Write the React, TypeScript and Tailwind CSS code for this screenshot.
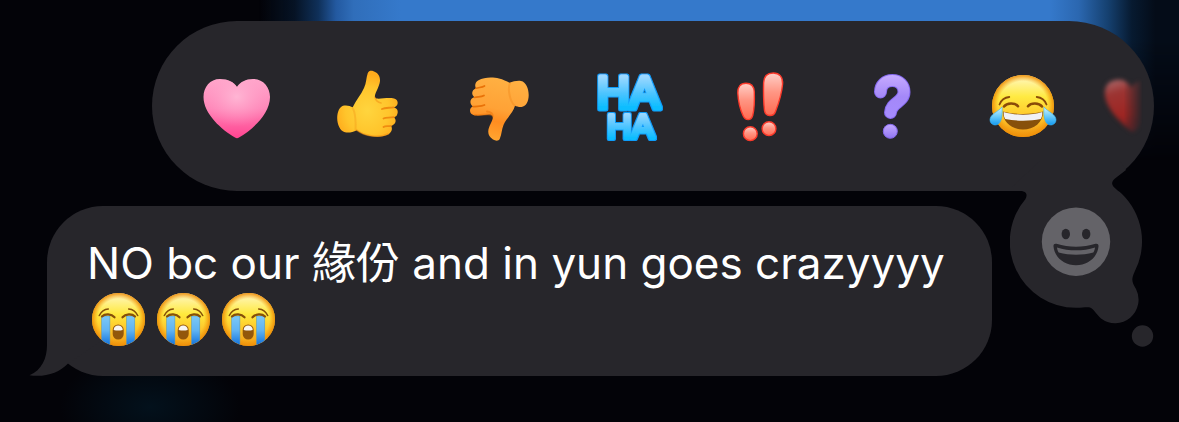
import { useId } from "react";
import type { ReactNode } from "react";

function PinkHeart() {
  return (
    <svg viewBox="0 0 80 80" className="size-20" aria-hidden="true">
      <defs>
        <linearGradient id="pink" x1="0" y1="0" x2="0" y2="1">
          <stop offset="0" stopColor="#ffa6cb" />
          <stop offset="0.5" stopColor="#ff86b8" />
          <stop offset="1" stopColor="#ff4390" />
        </linearGradient>
        <radialGradient id="pinkGlow" cx="0.5" cy="0.3" r="0.5">
          <stop offset="0" stopColor="#ffb9d6" stopOpacity="0.9" />
          <stop offset="1" stopColor="#ffa0c8" stopOpacity="0" />
        </radialGradient>
      </defs>
      <path fill="url(#pink)" d="M40 21C43 16 49 13 56 13C66 13 73 21 73 31C73 48 55 64 42 71.5Q40 73 38 71.5C25 64 6.5 48 6.5 31C6.5 21 13 13 23 13C31 13 37 16 40 21Z" />
      <path fill="url(#pinkGlow)" d="M40 21C43 16 49 13 56 13C66 13 73 21 73 31C73 48 55 64 42 71.5Q40 73 38 71.5C25 64 6.5 48 6.5 31C6.5 21 13 13 23 13C31 13 37 16 40 21Z" />
    </svg>
  );
}

function ThumbUp() {
  return (
    <svg viewBox="0 0 80 80" className="size-20" aria-hidden="true">
      <defs>
        <radialGradient id="up" cx="0.5" cy="0.6" r="0.55">
          <stop offset="0" stopColor="#ffd53e" />
          <stop offset="0.65" stopColor="#ffc52c" />
          <stop offset="1" stopColor="#ffab1c" />
        </radialGradient>
      </defs>
      <path
        fill="url(#up)"
        d="M24.7 41.3C28 34 33 29 36 22C38.5 17 38 12 39.8 7C41 4.5 43 4.4 45.5 5.2C50 7 52.3 10 52 15C51.5 21 46 28 47 31.5C48 34 57 31.5 65 32.2C70.5 33 70.5 38 68.5 39.7C67.5 41 66 41.3 65.3 41.5C70 42 70.5 46 69 49C68.3 50.4 67 51 65.8 51.2C69 53.5 68 58.5 63 60C65 62.5 63.5 66.5 60.5 68.3C56 71 49 71.3 42 70C36.5 69 32 66.5 28.7 64.2C25 66 21 67.2 17 66.3C12 65 9.2 58.5 9.2 52.3C9.2 46 11.5 40.5 16 39.6C19 39 22.5 40 24.7 41.3Z"
      />
      <g fill="none" stroke="#f08c10" strokeLinecap="round">
        <path strokeWidth="1.8" d="M65.5 41.4C60 42 57 41.5 54 43M65.8 51.1C61 52 58 51 55.5 52.5M63 59.8C59.5 60.5 57.5 59.5 55.5 61" />
        <path strokeWidth="2" opacity="0.3" d="M24.5 42C27.5 46 28 58 27.5 64" />
        <path strokeWidth="1.6" opacity="0.5" d="M47 31.5C48 35 50 36.5 53 37M28.7 64.2C37 70.5 51 72 60 68" />
      </g>
    </svg>
  );
}

function ThumbDown() {
  return (
    <svg viewBox="0 0 80 80" className="size-20" aria-hidden="true">
      <defs>
        <linearGradient id="down" x1="0.6" y1="0" x2="0.4" y2="1">
          <stop offset="0" stopColor="#ffb143" />
          <stop offset="0.5" stopColor="#ffa236" />
          <stop offset="0.7" stopColor="#ff8d20" />
          <stop offset="1" stopColor="#ffa631" />
        </linearGradient>
      </defs>
      <path
        fill="url(#down)"
        d="M50.5 16.8C54 15.5 58 14.5 62 15C67 16 69.7 22.5 69.7 29C69.7 35.5 67 40.5 62.5 41C60 41.2 57.5 40.5 56 39.8C54 47 47.5 52 44.5 59C42.5 63.5 43 68 40.7 73C39.5 75.3 36.5 75 34 73.5C30.5 71.5 29 68.5 29.3 65C29.5 60 34.5 54 33.8 50.5C32.5 46.5 25 50 16.5 49.3C10.5 49 10 43.5 12.3 41.4C12.8 40.8 13.6 40.6 14.3 40.5C10.5 38.5 10.5 33.5 14 31.8C14.5 31.5 15 31.4 15.5 31.3C12 28.5 12.5 24 17 22.2C15.5 20 16 16 19.5 14.3C25 11 34 11 40 12.5C44 13.5 47.5 15.2 50.5 16.8Z"
      />
      <g fill="none" stroke="#e97208" strokeLinecap="round">
        <path strokeWidth="1.7" d="M17 22.3C20 21.3 23 21.5 25.5 20M15.5 31.5C19 30.5 22 31.5 25 29.5M14.3 40.7C18 40 22 40.7 25.5 39" />
        <path strokeWidth="2" opacity="0.25" d="M51 17C48.5 22 50.5 35 55.5 39.5" />
        <path strokeWidth="1.8" opacity="0.5" d="M33.8 50.5C34 47.5 32 46 28 45.5M16 49C23 50 30 46.5 33.5 49.5" />
      </g>
    </svg>
  );
}

function Haha() {
  return (
    <svg viewBox="0 0 80 80" className="size-20 font-['Liberation_Sans',sans-serif]" aria-hidden="true">
      <defs>
        <linearGradient id="ha" gradientUnits="userSpaceOnUse" x1="0" y1="9" x2="0" y2="46">
          <stop offset="0.05" stopColor="#9bd8ff" />
          <stop offset="0.5" stopColor="#4cc4ff" />
          <stop offset="0.9" stopColor="#08bdff" />
        </linearGradient>
        <linearGradient id="haSmall" gradientUnits="userSpaceOnUse" x1="0" y1="46" x2="0" y2="76">
          <stop offset="0.05" stopColor="#9bd8ff" />
          <stop offset="0.5" stopColor="#4cc4ff" />
          <stop offset="0.9" stopColor="#08bdff" />
        </linearGradient>
        <filter id="balloon" x="-10%" y="-10%" width="120%" height="120%">
          <feMorphology in="SourceAlpha" operator="dilate" radius="1" result="grown" />
          <feFlood floodColor="#119dfb" />
          <feComposite in2="grown" operator="in" result="edge" />
          <feMerge>
            <feMergeNode in="edge" />
            <feMergeNode in="SourceGraphic" />
          </feMerge>
        </filter>
      </defs>
      <text strokeLinejoin="round" strokeLinecap="round" filter="url(#balloon)">
        <tspan x="7" y="42" fontSize="45" strokeWidth="5" fill="url(#ha)" stroke="url(#ha)">HA</tspan>
        <tspan x="17" y="72" fontSize="34" strokeWidth="4" fill="url(#haSmall)" stroke="url(#haSmall)">HA</tspan>
      </text>
    </svg>
  );
}

function Emphasis() {
  return (
    <svg viewBox="0 0 80 80" className="size-20" aria-hidden="true">
      <defs>
        <linearGradient id="red" x1="0" y1="0" x2="0" y2="1">
          <stop offset="0.05" stopColor="#ffc9c0" />
          <stop offset="0.45" stopColor="#ff9684" />
          <stop offset="1" stopColor="#ff6b52" />
        </linearGradient>
      </defs>
      <g fill="url(#red)" stroke="#fb3a2b" strokeWidth="1.4">
        <path d="M25 17.3C19.5 17.3 16.5 21 16.8 27C17.2 35 19.5 44 22 49.5C24.5 55 30 55 31.7 49.5C33.3 43 33.6 34 33.3 26C33 20.5 30 17.3 25 17.3Z" />
        <path d="M52.3 7C46 7 42.8 11 42.6 17C42.4 26 42.5 36 43.5 44.5C44.3 50.8 52.5 51.3 54.5 45.5C58 36.5 60.8 27 61.6 18C62 11 58.5 7 52.3 7Z" />
        <circle cx="29.3" cy="67.7" r="6.9" />
        <circle cx="48" cy="62.7" r="6.9" />
      </g>
    </svg>
  );
}

function Question() {
  return (
    <svg viewBox="0 0 80 80" className="size-20" aria-hidden="true">
      <defs>
        <linearGradient id="violet" gradientUnits="userSpaceOnUse" x1="0" y1="8" x2="0" y2="54">
          <stop offset="0" stopColor="#c7acff" />
          <stop offset="0.5" stopColor="#a488f8" />
          <stop offset="1" stopColor="#a68cff" />
        </linearGradient>
        <linearGradient id="violetDot" x1="0" y1="0" x2="0" y2="1">
          <stop offset="0" stopColor="#c4a9ff" />
          <stop offset="1" stopColor="#9176f2" />
        </linearGradient>
      </defs>
      <g fill="none" strokeLinecap="round">
        <path stroke="#8569ee" strokeWidth="13" d="M28.5 26C28.5 19 33.5 14.5 40.3 14.5C47.5 14.5 52 19.5 52 26C52 36 39 36.5 38.5 46.5" />
        <path stroke="url(#violet)" strokeWidth="11" d="M28.5 26C28.5 19 33.5 14.5 40.3 14.5C47.5 14.5 52 19.5 52 26C52 36 39 36.5 38.5 46.5" />
      </g>
      <circle cx="38.3" cy="65.3" r="7" fill="url(#violetDot)" stroke="#8569ee" />
    </svg>
  );
}

function Joy() {
  return (
    <svg viewBox="0 0 80 80" className="size-20" aria-hidden="true">
      <defs>
        <linearGradient id="joy" x1="0" y1="0" x2="0" y2="1">
          <stop offset="0.05" stopColor="#fff6b4" />
          <stop offset="0.35" stopColor="#ffea42" />
          <stop offset="0.65" stopColor="#ffc92b" />
          <stop offset="1" stopColor="#ef9412" />
        </linearGradient>
        <radialGradient id="joyRim" cx="0.5" cy="0.5" r="0.5">
          <stop offset="0.8" stopColor="#f29a0c" stopOpacity="0" />
          <stop offset="1" stopColor="#ef8f08" stopOpacity="0.95" />
        </radialGradient>
        <linearGradient id="drop" x1="0" y1="0" x2="0" y2="1">
          <stop offset="0" stopColor="#d6f4ff" />
          <stop offset="0.5" stopColor="#6fcdf9" />
          <stop offset="1" stopColor="#149af0" />
        </linearGradient>
      </defs>
      <circle cx="40" cy="40" r="31" fill="url(#joy)" />
      <circle cx="40" cy="40" r="31" fill="url(#joyRim)" />
      <g fill="none" stroke="#8a4b08" strokeLinecap="round">
        <path strokeWidth="1.8" d="M16.5 38.5C18 34.5 21.5 31.5 26.3 31M53.7 31C58.5 31.5 62 34.5 63.5 38.5" />
        <path strokeWidth="2.6" d="M21 40.5C24 36.5 32 36.5 35 40.2M45 40.2C48 36.5 56 36.5 59 40.5" />
      </g>
      <path fill="#87500a" d="M19.8 45.5C30 48.8 50 48.8 60.2 45.5C60 56.5 51 63.5 40 63.5C29 63.5 20 56.5 19.8 45.5Z" />
      <path fill="#f1f1f4" d="M20.7 46C32 49.5 48 49.5 59.3 46C59.5 49 58.8 51.5 57.8 53C47 55.2 33 55.2 22.2 53C21.2 51.5 20.5 49 20.7 46Z" />
      <g fill="url(#drop)" stroke="#38b3f4" strokeWidth="0.6">
        <path d="M19 41C19.5 48 19 55 15.5 58C11.5 60.5 6.8 58 7 53.5C7.3 48 15 46 19 41Z" />
        <path d="M61 41C60.5 48 61 55 64.5 58C68.5 60.5 73.2 58 73 53.5C72.7 48 65 46 61 41Z" />
      </g>
    </svg>
  );
}

function FadedHeart() {
  return (
    <svg
      viewBox="0 0 65 80"
      className="h-20 w-[65px] blur-[2px] [mask-image:linear-gradient(to_right,black_55%,transparent_84%)]"
      aria-hidden="true"
    >
      <defs>
        <linearGradient id="fade" x1="0" y1="0" x2="0.25" y2="1">
          <stop offset="0" stopColor="#ac7072" />
          <stop offset="0.3" stopColor="#9c3432" />
          <stop offset="0.75" stopColor="#9e2522" />
          <stop offset="1" stopColor="#7b2224" />
        </linearGradient>
      </defs>
      <path fill="url(#fade)" d="M44 22C40 15 34 13 28 14C19 15 16 22 17 30C19 43 32 57 45 66C51 63 57 56 60 50V16C52 14 46 17 44 22Z" />
    </svg>
  );
}

function Sob() {
  const id = useId();
  return (
    <svg viewBox="0 0 53 53" className="size-[53px]" role="img" aria-label="Loudly crying face">
      <defs>
        <linearGradient id={`${id}f`} x1="0" y1="0" x2="0" y2="1">
          <stop offset="0.03" stopColor="#fff6bc" />
          <stop offset="0.4" stopColor="#ffe93d" />
          <stop offset="0.7" stopColor="#fec42a" />
          <stop offset="1" stopColor="#f29a13" />
        </linearGradient>
        <radialGradient id={`${id}r`}>
          <stop offset="0.78" stopColor="#f29a0c" stopOpacity="0" />
          <stop offset="1" stopColor="#ee8d08" stopOpacity="0.95" />
        </radialGradient>
        <linearGradient id={`${id}t`} x1="0" y1="0" x2="0" y2="1">
          <stop offset="0" stopColor="#7cc8f5" />
          <stop offset="0.5" stopColor="#5fb3f2" />
          <stop offset="1" stopColor="#1272dc" />
        </linearGradient>
        <clipPath id={`${id}c`}>
          <circle cx="26.5" cy="26.5" r="26.5" />
        </clipPath>
      </defs>
      <circle cx="26.5" cy="26.5" r="26.5" fill={`url(#${id}f)`} />
      <circle cx="26.5" cy="26.5" r="26.5" fill={`url(#${id}r)`} />
      <g clipPath={`url(#${id}c)`} fill={`url(#${id}t)`} stroke="#4b95c4" strokeWidth="0.5">
        <rect x="9.7" y="23" width="8.2" height="29" />
        <rect x="34.6" y="23" width="8.2" height="29" />
      </g>
      <g fill="none" stroke="#865009" strokeLinecap="round">
        <path strokeWidth="1.6" d="M7.3 22.5C9 19 12 16.3 16.3 16M36.7 16C41 16.3 44 19 45.7 22.5" />
        <path strokeWidth="2.2" d="M10 23.5C13 20.5 19.5 20.8 22.5 24.3M30.5 24.3C33.5 20.8 40 20.5 43 23.5" />
      </g>
      <rect x="20.7" y="31.5" width="11" height="15" rx="5.5" fill="#93570b" />
      <path fill="#f8f6f4" d="M21.7 37C21.7 34 23.5 32.5 26.2 32.5S30.7 34 30.7 37Q26.2 38.2 21.7 37Z" />
    </svg>
  );
}

/* Connected thought bubble holding the emoji picker face. */
function PickerBubble() {
  return (
    <svg viewBox="1010 161 144 187" className="h-[187px] w-36" aria-hidden="true">
      <path
        fill="#27262b"
        d="M1012 187V191H1020C1026 191 1028 194 1025.500 199A66 66 0 0 0 1076 307.700C1081 308 1087 306.500 1090 307.500C1094 309 1096 314 1101 318.500A23.500 23.500 0 0 0 1136 289C1132 282 1131 280 1134.500 272A66 66 0 0 0 1121.500 193.500C1113 187 1109 184 1115 178.500L1126 170L1120 161H1040Z"
      />
      <circle cx="1142.500" cy="336" r="10.700" fill="#27262b" />
      <circle cx="1076" cy="241.700" r="34.200" fill="#646368" />
      <g fill="#27262b">
        <ellipse cx="1065.800" cy="234" rx="4.200" ry="5.200" />
        <ellipse cx="1086.200" cy="234" rx="4.200" ry="5.200" />
        <path d="M1056.500 243.800C1069 247.800 1083 247.800 1095.500 243.800C1097.500 243.300 1098.700 244.300 1098.500 246.500C1097.500 257.500 1087.500 265.200 1076 265.200C1064.500 265.200 1054.500 257.500 1053.500 246.500C1053.300 244.300 1054.500 243.300 1056.500 243.800Z" />
      </g>
      <path fill="#646368" d="M1057 247.500C1069 251.300 1083 251.300 1095 247.500C1094.800 249.500 1094.200 251 1093.300 252.600C1082 255.500 1070 255.500 1058.700 252.600C1057.800 251 1057.200 249.500 1057 247.500Z" />
    </svg>
  );
}

const reactions: { label: string; icon: ReactNode }[] = [
  { label: "Love", icon: <PinkHeart /> },
  { label: "Like", icon: <ThumbUp /> },
  { label: "Dislike", icon: <ThumbDown /> },
  { label: "Laugh", icon: <Haha /> },
  { label: "Emphasize", icon: <Emphasis /> },
  { label: "Question", icon: <Question /> },
  { label: "Tears of joy", icon: <Joy /> },
];

export default function App() {
  return (
    <main className="relative isolate flex min-h-screen flex-col overflow-hidden bg-[#030308] pt-[21px] font-[Inter,'Noto_Sans_CJK_TC',sans-serif] text-white">
      <div className="absolute inset-x-0 top-0 -z-10 h-40 bg-[linear-gradient(to_right,#03030800_22%,#061325_25%,#0f3059_27%,#2359a0_28.500%,#306eba_30%,#3579cb_34%,#3579cb_89%,#2b67b0_91.500%,#15406f_94%,#071a30_96%,#040c18_98%)] [mask-image:linear-gradient(black_25%,transparent)]" />
      <div className="absolute -bottom-10 left-[60px] -z-10 h-[110px] w-[180px] bg-[radial-gradient(closest-side,#03111c,transparent)]" />

      <section aria-label="Reactions" className="mr-[25px] ml-[152px] flex h-[170px] items-center overflow-hidden rounded-full bg-[#27262b] pl-[19px]">
        {reactions.map((r) => (
          <button key={r.label} type="button" aria-label={r.label} className="flex h-full w-[131px] shrink-0 items-center justify-center">
            {r.icon}
          </button>
        ))}
        <button type="button" aria-label="Red heart" className="flex h-full flex-1 items-center">
          <FadedHeart />
        </button>
      </section>

      <div className="mt-[15px] mr-[25px] ml-[47px] flex items-start gap-[18px]">
        <article className="relative isolate min-w-0 flex-1 rounded-[56px] bg-[#27262b] py-[29px] pr-8 pl-10">
          <svg viewBox="29 320 74 56" className="absolute bottom-0 -left-[18px] -z-10 h-14 w-[74px]" aria-hidden="true">
            <path fill="#27262b" d="M47 320V345C47 358 42 370 29.500 375.300C45 377.500 59 373 68 363.500L103 340V320Z" />
          </svg>
          <p className="text-[44px] leading-[56px]">NO bc our 緣份 and in yun goes crazyyyy</p>
          <div className="flex h-14 items-center gap-3 pl-[5px]">
            <Sob />
            <Sob />
            <Sob />
          </div>
        </article>
        <button type="button" aria-label="Choose an emoji" className="-mt-[45px] -mb-4 shrink-0">
          <PickerBubble />
        </button>
      </div>
    </main>
  );
}
